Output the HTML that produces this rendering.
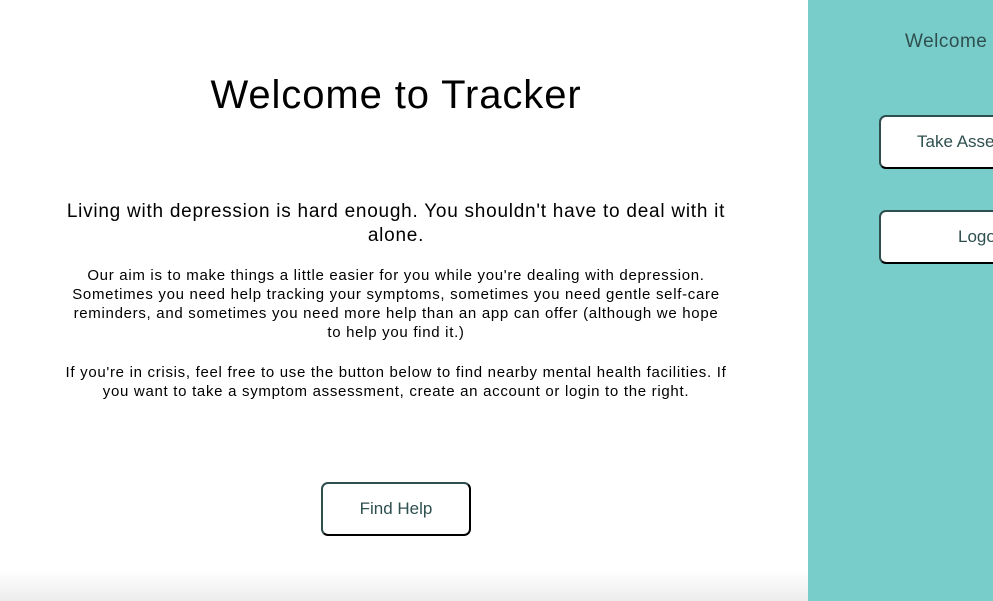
<!DOCTYPE html>
<html><head><style>
*{margin:0;padding:0;box-sizing:border-box}
body{width:993px;height:601px;overflow:hidden;background:#fff;font-family:"Liberation Sans",sans-serif;position:relative;color:#000}
h1{position:absolute;top:73px;left:0;width:792px;text-align:center;font-weight:normal;font-size:40px;letter-spacing:0.9px}
.sub{position:absolute;top:200px;left:0;width:792px;text-align:center;font-size:19px;line-height:24px;letter-spacing:0.75px;white-space:nowrap}
.p{position:absolute;left:0;width:792px;text-align:center;font-size:15px;line-height:19px;letter-spacing:0.7px;white-space:nowrap}
.btn{position:absolute;background:#fff;border:2px solid #2f4f4f;border-bottom-color:#000;border-right-color:#000;border-radius:7px;color:#2f4f4f;font-size:17px;display:flex;align-items:center;justify-content:center;white-space:nowrap}
.side{position:absolute;left:808px;top:0;width:185px;height:601px;background:#78cdcb;overflow:hidden}
.fade{position:absolute;left:0;top:570px;width:808px;height:31px;background:linear-gradient(#fff,#ececec)}
</style></head><body>
<div class="fade"></div>
<h1>Welcome to Tracker</h1>
<div class="sub">Living with depression is hard enough. You shouldn't have to deal with it<br>alone.</div>
<div class="p" style="top:266px">Our aim is to make things a little easier for you while you're dealing with depression.<br>Sometimes you need help tracking your symptoms, sometimes you need gentle self-care<br>reminders, and sometimes you need more help than an app can offer (although we hope<br>to help you find it.)</div>
<div class="p" style="top:363px">If you're in crisis, feel free to use the button below to find nearby mental health facilities. If<br>you want to take a symptom assessment, create an account or login to the right.</div>
<div class="btn" style="left:321px;top:482px;width:150px;height:54px">Find Help</div>
<div class="side">
<div style="position:absolute;left:97px;top:31px;font-size:19px;color:#2f4f4f;white-space:nowrap;letter-spacing:0.5px">Welcome</div>
<div class="btn" style="left:71px;top:115px;width:160px;height:54px;justify-content:flex-start;padding-left:36px">Take Assessment</div>
<div class="btn" style="left:71px;top:210px;width:160px;height:54px;justify-content:flex-start;padding-left:77px">Logout</div>
</div>
</body></html>
